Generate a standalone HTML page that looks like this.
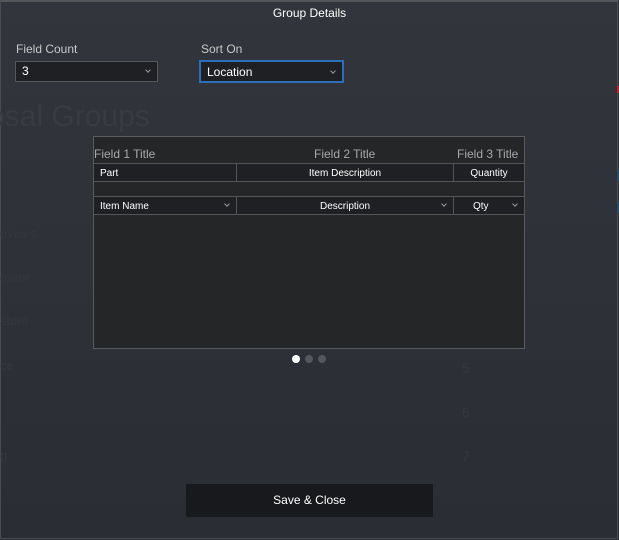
<!DOCTYPE html>
<html><head><meta charset="utf-8"><style>
*{margin:0;padding:0;box-sizing:border-box}
body{width:619px;height:540px;overflow:hidden;font-family:"Liberation Sans",sans-serif;background:linear-gradient(#32353c,#2a2d34);position:relative;color:#fff}
.a{position:absolute}
.frame{left:0;top:0;width:618px;height:539px;border:1px solid #4a4c50;border-top:2px solid #55575b}
.ghost{color:#34373e;font-size:13px}
.lbl{font-size:12px;color:#c8c8c8}
.sel{background:#1f2024;border:1px solid #55575b;font-size:12px;color:#fff;padding-left:6px;line-height:18px}
.chev{position:absolute;right:7px;top:6px;width:4px;height:4px;border-right:1px solid #999;border-bottom:1px solid #999;transform:rotate(45deg)}
.panel{left:93px;top:136px;width:432px;height:213px;background:#252628;border:1px solid #5a5b5e}
.ft{font-size:12px;color:#a8a8a8;top:147px}
.cell{background:#1f2023;border:1px solid #555;font-size:10px;color:#fff;height:19px;line-height:19px}
.dot{width:8px;height:8px;border-radius:50%;top:355px;background:#55575c}
</style></head><body>
<div class="a frame"></div>
<div class="a" style="right:0;top:86px;width:2px;height:7px;background:#c0202a"></div>
<div class="a" style="right:0;top:170px;width:2px;height:11px;background:#2a4a6a"></div>
<div class="a" style="right:0;top:202px;width:2px;height:11px;background:#2a4a6a"></div>
<div class="a ghost" style="left:-12px;top:100px;font-size:30px;color:#383b42">osal Groups</div>
<div class="a ghost" style="left:0;top:226px">evices</div>
<div class="a ghost" style="left:0;top:270px">eater</div>
<div class="a ghost" style="left:0;top:313px">stem</div>
<div class="a ghost" style="left:0;top:358px">ce</div>
<div class="a ghost" style="left:0;top:448px">g</div>
<div class="a ghost" style="left:462px;top:360px;font-size:14px">5</div>
<div class="a ghost" style="left:462px;top:404px;font-size:14px">6</div>
<div class="a ghost" style="left:462px;top:448px;font-size:14px">7</div>
<div class="a" style="left:0;width:619px;top:6px;text-align:center;font-size:12px;color:#fff">Group Details</div>
<div class="a lbl" style="left:16px;top:42px">Field Count</div>
<div class="a sel" style="left:15px;top:61px;width:143px;height:21px;line-height:19px">3<span class="chev"></span></div>
<div class="a lbl" style="left:201px;top:42px">Sort On</div>
<div class="a sel" style="left:199px;top:60px;width:145px;height:23px;line-height:21px;border:2px solid #2a6fb8">Location<span class="chev" style="top:7px"></span></div>
<div class="a panel"></div>
<div class="a ft" style="left:94px">Field 1 Title</div>
<div class="a ft" style="left:314px">Field 2 Title</div>
<div class="a ft" style="left:457px">Field 3 Title</div>
<div class="a cell" style="left:93px;top:163px;width:144px;padding-left:6px">Part</div>
<div class="a cell" style="left:236px;top:163px;width:218px;text-align:center">Item Description</div>
<div class="a cell" style="left:453px;top:163px;width:72px;text-align:center">Quantity</div>
<div class="a cell" style="left:93px;top:196px;width:144px;padding-left:6px">Item Name<span class="chev" style="top:5px"></span></div>
<div class="a cell" style="left:236px;top:196px;width:218px;text-align:center">Description<span class="chev" style="top:5px"></span></div>
<div class="a cell" style="left:453px;top:196px;width:72px;padding-left:19px">Qty<span class="chev" style="top:5px"></span></div>
<div class="a dot" style="left:292px;background:#fff"></div>
<div class="a dot" style="left:305px"></div>
<div class="a dot" style="left:318px"></div>
<div class="a" style="left:186px;top:484px;width:247px;height:33px;background:#18191c;font-size:12px;text-align:center;line-height:33px">Save &amp; Close</div>
</body></html>
